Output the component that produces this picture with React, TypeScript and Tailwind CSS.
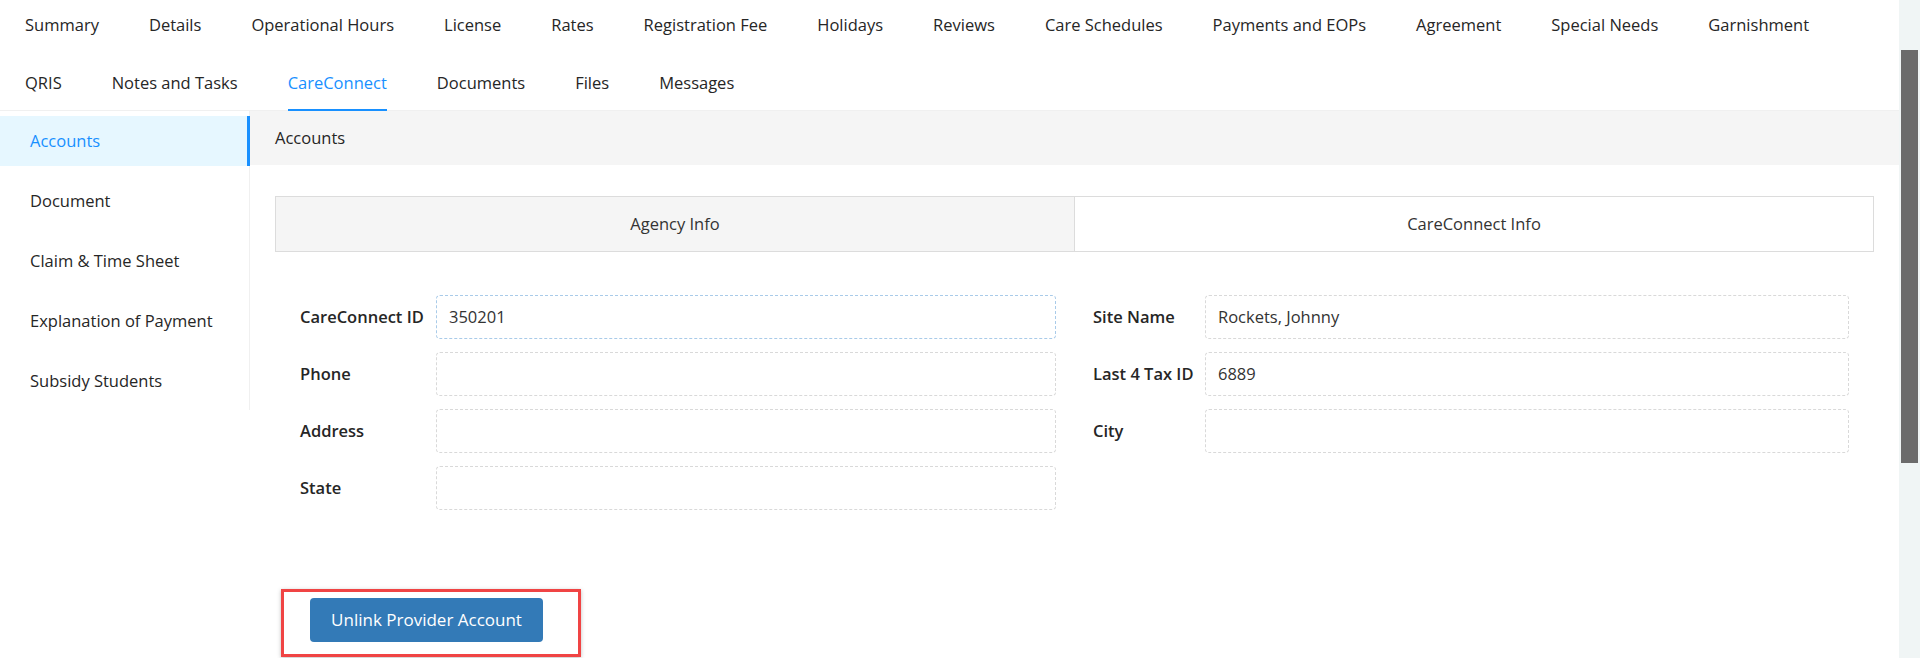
import React from "react";

const topTabs = [
  "Summary",
  "Details",
  "Operational Hours",
  "License",
  "Rates",
  "Registration Fee",
  "Holidays",
  "Reviews",
  "Care Schedules",
  "Payments and EOPs",
  "Agreement",
  "Special Needs",
  "Garnishment",
];

const secondTabs = ["QRIS", "Notes and Tasks", "CareConnect", "Documents", "Files", "Messages"];

const sideItems = ["Accounts", "Document", "Claim & Time Sheet", "Explanation of Payment", "Subsidy Students"];

function Field({
  label,
  value,
  labelWidth,
  focused,
}: {
  label: string;
  value?: string;
  labelWidth: string;
  focused?: boolean;
}) {
  return (
    <div className="flex items-center h-[44px]">
      <div className={`${labelWidth} shrink-0 font-semibold text-[16.5px] text-[#262626]`}>{label}</div>
      <div
        className={`flex-1 h-[44px] rounded-[4px] border border-dashed flex items-center pl-[12px] text-[16.5px] text-[#333]  ${
          focused ? "border-[#a9cbe9]" : "border-[#d9d9d9]"
        }`}
      >
        {value}
      </div>
    </div>
  );
}

export default function App() {
  return (
    <div
      className="flex h-[658px] w-[1920px] overflow-hidden bg-white text-[#262626]"
      style={{ fontFamily: '"Open Sans", "Noto Sans", sans-serif' }}
    >
      <div className="flex-1 flex flex-col min-w-0">
        {/* top tabs */}
        <div className="border-b border-[#f0f0f0] text-[16.5px] leading-[22px]">
          <div className="flex h-[50px] items-center gap-[50px] pl-[25px]">
            {topTabs.map((t) => (
              <div key={t} className="whitespace-nowrap">
                {t}
              </div>
            ))}
          </div>
          <div className="flex gap-[50px] pl-[25px]">
            {secondTabs.map((t) => (
              <div
                key={t}
                className={`relative whitespace-nowrap pt-[22px] pb-[16px] ${
                  t === "CareConnect" ? "text-[#1890ff]" : ""
                }`}
              >
                {t}
                {t === "CareConnect" && (
                  <div className="absolute left-0 right-0 bottom-[-1px] h-[2px] bg-[#1890ff]" />
                )}
              </div>
            ))}
          </div>
        </div>

        <div className="flex flex-1 min-h-0">
          {/* side menu */}
          <div className="w-[250px] shrink-0 self-start border-r border-[#f0f0f0] pt-[5px] pb-[4px] flex flex-col gap-[10px]">
            {sideItems.map((s, i) => (
              <div
                key={s}
                className={`relative h-[50px] flex items-center pl-[30px] text-[16.5px] ${
                  i === 0 ? "bg-[#e6f7ff] text-[#1890ff]" : "text-[#262626]"
                }`}
              >
                {s}
                {i === 0 && <div className="absolute top-0 bottom-0 right-[-1px] w-[3px] bg-[#1890ff]" />}
              </div>
            ))}
          </div>

          {/* content */}
          <div className="flex-1 min-w-0">
            <div className="h-[54px] bg-[#f5f5f5] flex items-center pl-[25px] text-[16.5px] text-[#262626]">
              Accounts
            </div>

            <div className="px-[25px] pt-[31px]">
              <div className="flex h-[56px] border border-[#dcdcdc] text-[16.5px] text-[#333]">
                <div className="w-[799px] bg-[#f5f5f5] border-r border-[#dcdcdc] flex items-center justify-center">
                  Agency Info
                </div>
                <div className="flex-1 flex items-center justify-center">CareConnect Info</div>
              </div>

              <div className="px-[25px] pt-[43px] grid grid-cols-2 gap-x-[37px]">
                <div className="flex flex-col gap-[13px]">
                  <Field label="CareConnect ID" value="350201" labelWidth="w-[136px]" focused />
                  <Field label="Phone" labelWidth="w-[136px]" />
                  <Field label="Address" labelWidth="w-[136px]" />
                  <Field label="State" labelWidth="w-[136px]" />
                </div>
                <div className="flex flex-col gap-[13px]">
                  <Field label="Site Name" value="Rockets, Johnny" labelWidth="w-[112px]" />
                  <Field label="Last 4 Tax ID" value="6889" labelWidth="w-[112px]" />
                  <Field label="City" labelWidth="w-[112px]" />
                </div>
              </div>
            </div>

            <div className="ml-[31px] mt-[79px] w-[300px] h-[68px] border-[3px] border-[#f04444] shadow-[0_1px_4px_rgba(0,0,0,0.25)] pl-[26px] pt-[6px]">
              <button className="w-[233px] h-[44px] rounded-[4px] bg-[#337ab7] text-white text-[17px]">
                Unlink Provider Account
              </button>
            </div>
          </div>
        </div>
      </div>

      {/* scrollbar */}
      <div className="w-[21px] shrink-0 bg-[#f0f5f5] pt-[50px] pl-[2px]">
        <div className="w-[17px] h-[413px] bg-[#6b6b6b]" />
      </div>
    </div>
  );
}
